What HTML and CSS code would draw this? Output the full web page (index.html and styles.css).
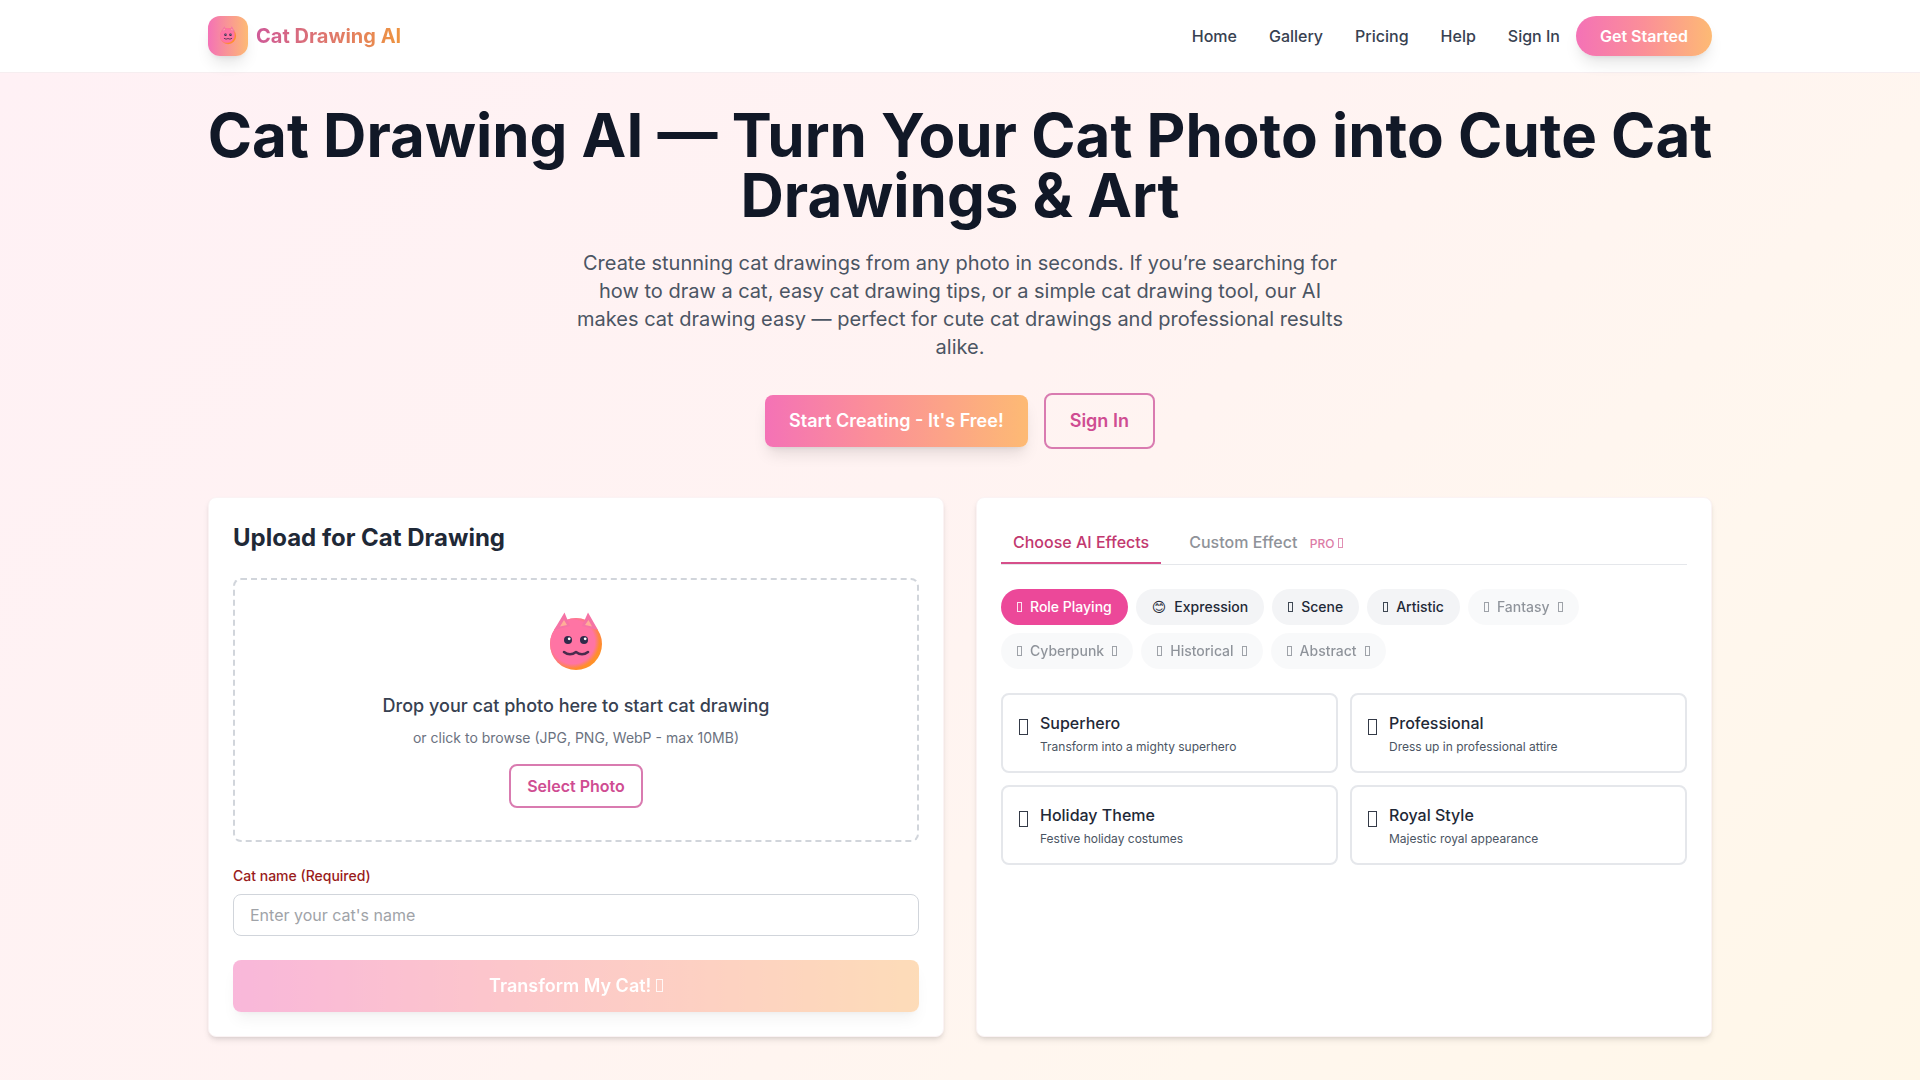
FILE: index.html
```html
<!DOCTYPE html>
<html lang="en">
<head>
<meta charset="utf-8">
<meta name="viewport" content="width=device-width, initial-scale=1">
<title>Cat Drawing AI</title>
<link rel="stylesheet" href="styles.css">
</head>
<body>
<svg class="defs" aria-hidden="true">
  <defs>
    <linearGradient id="cat-body" x1="0" y1="0" x2="1" y2="1"><stop offset="0" stop-color="#fb7185"/><stop offset=".45" stop-color="#fd7c66"/><stop offset=".75" stop-color="#ff8c2e"/><stop offset="1" stop-color="#ff9a1f"/></linearGradient>
    <radialGradient id="cat-glow" cx=".44" cy=".46" r=".51"><stop offset="0" stop-color="#ff74a4"/><stop offset=".82" stop-color="#ff74a4"/><stop offset="1" stop-color="#ff74a4" stop-opacity="0"/></radialGradient>
    <symbol id="cat" viewBox="0 0 64 64">
      <circle cx="32" cy="32" r="26" fill="url(#cat-body)"/>
      <circle cx="32" cy="32" r="26" fill="url(#cat-glow)"/>
      <path d="M10 18 20.500 0.500 26 14ZM54 18 44 0.500 38 14Z" fill="#f573a5"/>
      <path d="M16 14.500 20 8 23 13ZM48 14.500 44.500 8 41 13Z" fill="#ffae98"/>
      <circle cx="24" cy="28" r="4" fill="#2f2a4a"/><circle cx="40" cy="28" r="4" fill="#2f2a4a"/>
      <circle cx="25.200" cy="26.800" r="1.400" fill="#fff"/><circle cx="41.200" cy="26.800" r="1.400" fill="#fff"/>
      <path d="M20 40Q26 44.500 32 40Q38 44.500 44 40" fill="none" stroke="#4a2b4d" stroke-width="2.600" stroke-linecap="round" stroke-linejoin="round"/>
    </symbol>
  </defs>
</svg>
<header class="header">
  <div class="container header-row">
    <a class="brand" href="#"><span class="brand-mark"><svg class="brand-cat" aria-hidden="true"><use href="#cat"/></svg></span><span class="brand-name">Cat Drawing AI</span></a>
    <div class="header-right">
      <nav class="nav"><a href="#">Home</a><a href="#">Gallery</a><a href="#">Pricing</a><a href="#">Help</a><a href="#">Sign In</a></nav>
      <button class="btn-started" type="button">Get Started</button>
    </div>
  </div>
</header>
<main class="main">
  <div class="container">
    <section class="hero">
      <h1>Cat Drawing AI — Turn Your Cat Photo into Cute Cat Drawings &amp; Art</h1>
      <p>Create stunning cat drawings from any photo in seconds. If you’re searching for how to draw a cat, easy cat drawing tips, or a simple cat drawing tool, our AI makes cat drawing easy — perfect for cute cat drawings and professional results alike.</p>
      <div class="hero-actions">
        <button class="btn-primary" type="button">Start Creating - It's Free!</button>
        <button class="btn-outline btn-large" type="button">Sign In</button>
      </div>
    </section>
    <div class="panels">
      <form class="panel">
        <h2>Upload for Cat Drawing</h2>
        <div class="dropzone">
          <svg class="drop-cat" aria-hidden="true"><use href="#cat"/></svg>
          <p class="drop-title">Drop your cat photo here to start cat drawing</p>
          <p class="drop-hint">or click to browse (JPG, PNG, WebP - max 10MB)</p>
          <button class="btn-outline btn-small" type="button">Select Photo</button>
        </div>
        <label class="field-label" for="cat-name">Cat name (Required)</label>
        <input class="field" id="cat-name" type="text" placeholder="Enter your cat's name" required>
        <button class="btn-primary btn-block" type="submit" disabled>Transform My Cat! <i class="glyph glyph-md"></i></button>
      </form>
      <section class="panel">
        <div class="tabs" role="tablist">
          <button class="tab tab-active" role="tab" aria-selected="true" type="button">Choose AI Effects</button>
          <button class="tab" role="tab" aria-selected="false" type="button">Custom Effect <span class="pro">PRO <i class="glyph"></i></span></button>
        </div>
        <div class="pills">
          <button class="pill pill-active" type="button"><i class="glyph"></i>Role Playing</button>
          <button class="pill" type="button"><span class="smile">&#x1F60A;&#xFE0E;</span>Expression</button>
          <button class="pill" type="button"><i class="glyph"></i>Scene</button>
          <button class="pill" type="button"><i class="glyph"></i>Artistic</button>
          <button class="pill" type="button" disabled><i class="glyph"></i>Fantasy<i class="glyph"></i></button>
          <button class="pill" type="button" disabled><i class="glyph"></i>Cyberpunk<i class="glyph"></i></button>
          <button class="pill" type="button" disabled><i class="glyph"></i>Historical<i class="glyph"></i></button>
          <button class="pill" type="button" disabled><i class="glyph"></i>Abstract<i class="glyph"></i></button>
        </div>
        <div class="effects">
          <button class="effect" type="button"><i class="glyph glyph-lg"></i><span class="effect-text"><span class="effect-name">Superhero</span><span class="effect-info">Transform into a mighty superhero</span></span></button>
          <button class="effect" type="button"><i class="glyph glyph-lg"></i><span class="effect-text"><span class="effect-name">Professional</span><span class="effect-info">Dress up in professional attire</span></span></button>
          <button class="effect" type="button"><i class="glyph glyph-lg"></i><span class="effect-text"><span class="effect-name">Holiday Theme</span><span class="effect-info">Festive holiday costumes</span></span></button>
          <button class="effect" type="button"><i class="glyph glyph-lg"></i><span class="effect-text"><span class="effect-name">Royal Style</span><span class="effect-info">Majestic royal appearance</span></span></button>
        </div>
      </section>
    </div>
  </div>
</main>
</body>
</html>
```
FILE: styles.css
```css
*, *::before, *::after { box-sizing: border-box; }
body { margin: 0; font-family: Inter, sans-serif; font-size: 16px; line-height: 24px; color: #1f2937; background: #fff; }
h1, h2, p { margin: 0; }
a { color: inherit; text-decoration: none; }
button, input { font: inherit; color: inherit; margin: 0; }
button { border: 0; background: none; padding: 0; cursor: pointer; }
.defs { position: absolute; width: 0; height: 0; }
.container { max-width: 1536px; margin: 0 auto; padding: 0 16px; }

.header { background: #fff; border-bottom: 1px solid #f6eef0; }
.header-row { display: flex; align-items: center; justify-content: space-between; padding-top: 16px; padding-bottom: 16px; }
.brand { display: flex; align-items: center; gap: 8px; }
.brand-mark { display: flex; align-items: center; justify-content: center; width: 40px; height: 40px; border-radius: 12px; background: linear-gradient(90deg, #f472b6, #fdba74); box-shadow: 0 10px 15px -3px rgba(0,0,0,.1), 0 4px 6px -4px rgba(0,0,0,.1); }
.brand-cat { width: 20px; height: 20px; }
.brand-name { font-size: 20px; line-height: 28px; font-weight: 700; color: transparent; background: linear-gradient(90deg, #cf5a98, #ee9440); -webkit-background-clip: text; background-clip: text; }
.header-right { display: flex; align-items: center; gap: 16px; }
.nav { display: flex; gap: 32px; font-weight: 500; color: #374151; }
.btn-started { padding: 8px 24px; border-radius: 20px; color: #fff; font-weight: 600; background: linear-gradient(90deg, #f472b6, #fb8f98 50%, #fdba74); box-shadow: 0 10px 15px -3px rgba(0,0,0,.1), 0 4px 6px -4px rgba(0,0,0,.1); }

.main { padding: 32px 0 48px; background: linear-gradient(135deg, #fff1f5, #fff3f2 45%, #fff7ee 75%, #fff7e8); }
.hero { text-align: center; margin-bottom: 48px; }
.hero h1 { margin: 0 -8px 24px; font-size: 60px; line-height: 60px; font-weight: 700; color: #111827; }
.hero p { max-width: 768px; margin: 0 auto 32px; font-size: 20px; line-height: 28px; color: #4b5563; }
.hero-actions { display: flex; align-items: center; justify-content: center; gap: 16px; }
.btn-primary { padding: 12px 24px; border-radius: 8px; color: #fff; font-size: 18px; line-height: 28px; font-weight: 600; background: linear-gradient(90deg, #f472b6, #fb8f98 40%, #fdba74); box-shadow: 0 10px 15px -3px rgba(0,0,0,.1), 0 4px 6px -4px rgba(0,0,0,.1); }
.btn-outline { border: 2px solid #d97bb0; border-radius: 8px; color: #cf4d92; font-weight: 600; }
.btn-large { padding: 12px 24px; font-size: 18px; line-height: 28px; }
.btn-small { padding: 8px 16px; }
.btn-block { width: 100%; }
.btn-block:disabled { opacity: .5; cursor: default; }

.panels { display: grid; grid-template-columns: 1fr 1fr; gap: 32px; }
.panel { padding: 24px; border: 1px solid #fbf3f4; border-radius: 8px; background: #fff; box-shadow: 0 4px 6px -1px rgba(0,0,0,.1), 0 2px 4px -2px rgba(0,0,0,.1); }
.panel h2 { font-size: 24px; line-height: 32px; font-weight: 700; margin-bottom: 24px; }
.dropzone { display: flex; flex-direction: column; align-items: center; padding: 32px; margin-bottom: 24px; border: 2px dashed #d1d5db; border-radius: 8px; }
.drop-cat { width: 64px; height: 64px; margin-bottom: 16px; }
.drop-title { font-size: 18px; line-height: 28px; font-weight: 500; margin-bottom: 8px; color: #374151; }
.drop-hint { font-size: 14px; line-height: 20px; margin-bottom: 16px; color: #6b7280; }
.field-label { display: block; font-size: 14px; line-height: 20px; font-weight: 500; margin-bottom: 8px; color: #991b1b; }
.field { display: block; width: 100%; padding: 8px 16px; margin-bottom: 24px; border: 1px solid #d1d5db; border-radius: 8px; background: #fff; line-height: 24px; }
.field::placeholder { color: #a0a3a8; opacity: 1; }

.glyph { display: inline-block; flex: none; width: 5px; height: 10px; border: 1px solid currentColor; opacity: .85; }
.glyph-md { width: 7px; height: 13px; }
.glyph-lg { width: 9px; height: 16px; margin-top: 8px; color: #111827; }

.tabs { display: flex; gap: 16px; margin-bottom: 24px; border-bottom: 1px solid #e5e7eb; }
.tab { padding: 8px 12px; border-bottom: 2px solid transparent; font-weight: 500; color: #8f9299; }
.tab-active { color: #c2386f; border-color: #d64f8a; }
.pro { margin-left: 8px; font-size: 12px; line-height: 16px; color: #dc7ba6; }
.pills { display: flex; flex-wrap: wrap; gap: 8px; margin-bottom: 24px; }
.pill { display: flex; align-items: center; gap: 8px; padding: 8px 16px; border-radius: 18px; font-size: 14px; line-height: 20px; font-weight: 500; background: #f3f4f6; }
.pill-active { color: #fff; background: #ec4899; }
.pill:disabled { opacity: .5; cursor: default; }
.smile { font-family: "DejaVu Sans", sans-serif; }
.effects { display: grid; grid-template-columns: 1fr 1fr; gap: 12px; }
.effect { display: flex; align-items: flex-start; gap: 12px; padding: 16px; border: 2px solid #e5e7eb; border-radius: 8px; text-align: left; }
.effect-text { display: flex; flex-direction: column; gap: 4px; }
.effect-name { font-weight: 500; }
.effect-info { font-size: 12px; line-height: 16px; color: #4b5563; }

@media (max-width: 900px) {
  .nav { display: none; }
  .panels, .effects { grid-template-columns: 1fr; }
  .hero h1 { font-size: 40px; line-height: 44px; }
}
```
